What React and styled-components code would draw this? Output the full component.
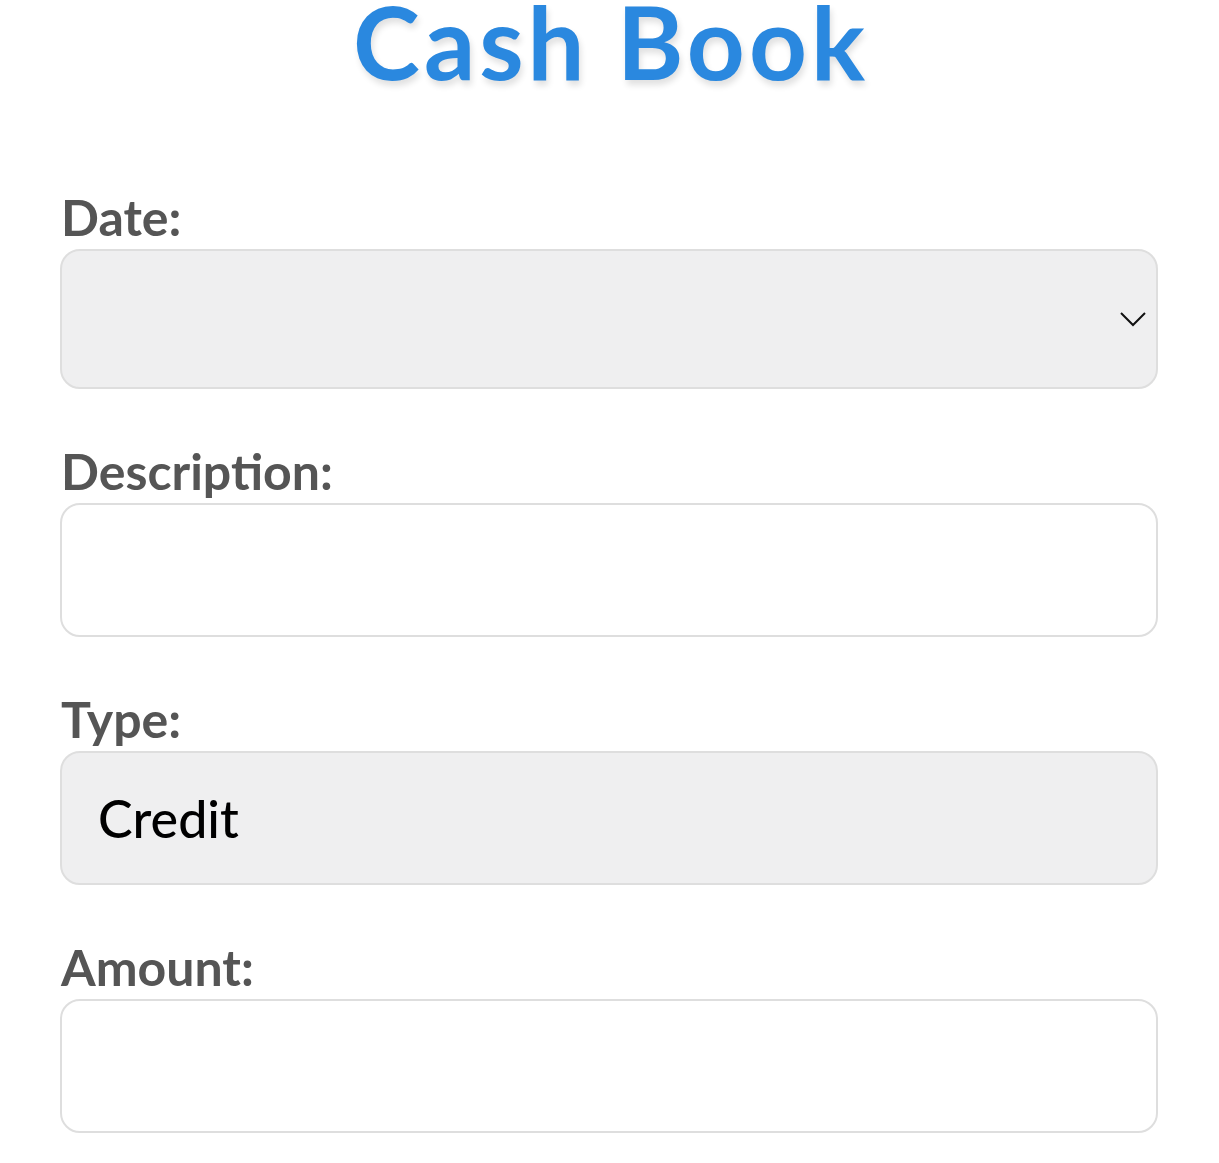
import React from "react";
import styled, { createGlobalStyle } from "styled-components";

const Global = createGlobalStyle`
  html, body { margin: 0; padding: 0; background: #ffffff; }
  body { font-family: Lato, "Open Sans", sans-serif; }
`;

const Page = styled.main`
  display: flex;
  flex-direction: column;
  padding: 0 61px 0 60px;
  overflow: hidden;
`;

const Title = styled.h1`
  margin: 0 0 0 4px;
  text-align: center;
  font-family: Lato, sans-serif;
  font-weight: 700;
  font-size: 101px;
  line-height: 82px;
  letter-spacing: 4px;
  color: #2a88df;
  text-shadow: 2px 5px 6px rgba(0, 0, 0, 0.12);
`;

const Form = styled.form`
  display: flex;
  flex-direction: column;
  gap: 57px;
  margin-top: 110px;
`;

const Field = styled.div`
  display: flex;
  flex-direction: column;
  gap: 7px;
`;

const Label = styled.label`
  font-family: Lato, sans-serif;
  font-weight: 700;
  font-size: 50px;
  line-height: 50px;
  color: #555555;
  padding-left: 1px;
`;

const Box = styled.div`
  box-sizing: border-box;
  height: ${(p) => p.$h}px;
  display: flex;
  align-items: center;
  justify-content: ${(p) => (p.$select ? "flex-end" : "flex-start")};
  padding: 0 10px 0 36px;
  border: 2px solid #dedede;
  border-radius: 20px;
  background: ${(p) => (p.$filled ? "#efeff0" : "#ffffff")};
  font-family: Lato, sans-serif;
  font-size: 52px;
  font-weight: 500;
  color: #000000;
`;

const Chevron = () => (
  <svg width="26" height="16" viewBox="0 0 26 16" fill="none">
    <polyline points="1,2 13,14 25,2" stroke="#111" strokeWidth="2" />
  </svg>
);

export default function App() {
  return (
    <>
      <Global />
      <Page>
        <Title>Cash Book</Title>
        <Form>
          <Field>
            <Label>Date:</Label>
            <Box $h={140} $filled $select>
              <Chevron />
            </Box>
          </Field>
          <Field>
            <Label>Description:</Label>
            <Box $h={134} />
          </Field>
          <Field>
            <Label>Type:</Label>
            <Box $h={134} $filled>Credit</Box>
          </Field>
          <Field>
            <Label>Amount:</Label>
            <Box $h={134} />
          </Field>
        </Form>
      </Page>
    </>
  );
}
